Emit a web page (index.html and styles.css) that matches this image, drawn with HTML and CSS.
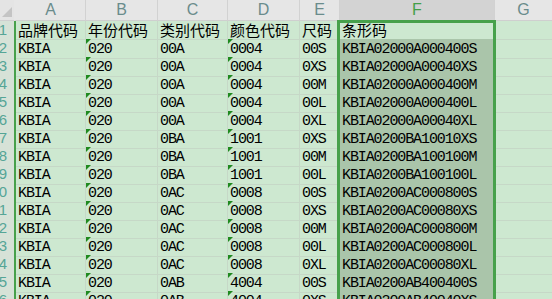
FILE: index.html
```html
<!DOCTYPE html>
<html lang="zh-CN">
<head>
  <meta charset="UTF-8" />
  <title>条形码</title>
  <link rel="stylesheet" href="styles.css">
</head>
<body>
  <div class="sheet">
    <div class="row head">
      <div class="corner"><span class="tri"></span></div>
      <div class="col">A</div>
      <div class="col">B</div>
      <div class="col">C</div>
      <div class="col">D</div>
      <div class="col">E</div>
      <div class="col sel">F</div>
      <div class="col last">G</div>
    </div>
    <div id="rows"></div>
    <div class="selbox"></div>
  </div>

  <script>
    const rows = [
      ["00A", "0004", "00S"], ["00A", "0004", "0XS"], ["00A", "0004", "00M"],
      ["00A", "0004", "00L"], ["00A", "0004", "0XL"], ["0BA", "1001", "0XS"],
      ["0BA", "1001", "00M"], ["0BA", "1001", "00L"], ["0AC", "0008", "00S"],
      ["0AC", "0008", "0XS"], ["0AC", "0008", "00M"], ["0AC", "0008", "00L"],
      ["0AC", "0008", "0XL"], ["0AB", "4004", "00S"], ["0AB", "4004", "0XS"]
    ];

    const box = document.getElementById("rows");
    let html = `<div class="row"><div class="num">1</div>
      <div class="cell a cn">品牌代码</div><div class="cell cn">年份代码</div>
      <div class="cell cn">类别代码</div><div class="cell cn">颜色代码</div>
      <div class="cell cn">尺码</div><div class="cell cn">条形码</div>
      <div class="cell last"></div></div>`;

    rows.forEach((r, i) => {
      const code = "KBIA" + "020" + r[0] + r[1] + r[2];
      html += `<div class="row"><div class="num">${i + 2}</div>
        <div class="cell a">KBIA</div><div class="cell txt">020</div>
        <div class="cell">${r[0]}</div><div class="cell txt">${r[1]}</div>
        <div class="cell">${r[2]}</div><div class="cell f">${code}</div>
        <div class="cell last"></div></div>`;
    });
    box.innerHTML = html;
  </script>
</body>
</html>
```

FILE: styles.css
```css
body {
  margin: 0;
  background: #cde8d0;
  overflow: hidden;
}
.sheet {
  position: relative;
  height: 299px;
  overflow: hidden;
}
.row {
  display: grid;
  grid-template-columns: 14px 72px 72px 70px 72px 40px 155px 1fr;
  height: 18px;
}
.row.head {
  height: 21px;
}

/* column headers */
.corner {
  position: relative;
  background: #e4e4e4;
  border-bottom: 1px solid #cfcfcf;
}
.tri {
  position: absolute;
  right: 2px;
  bottom: 3px;
  width: 0;
  height: 0;
  border-left: 10px solid transparent;
  border-bottom: 10px solid #c4c4c4;
}
.col {
  box-sizing: border-box;
  background: #e6e6e6;
  border-right: 1px solid #d2d2d2;
  border-bottom: 1px solid #cfcfcf;
  font: 16px "Liberation Sans", Arial, sans-serif;
  color: #6a8c8c;
  text-align: center;
  line-height: 20px;
}
.col:nth-child(2) {
  border-left: 2px solid #e6e6e6;
}
.col.sel {
  background: #d3d3d3;
  color: #43a047;
}
.col.last {
  border-right: none;
}

/* row numbers */
.num {
  display: flex;
  justify-content: flex-end;
  overflow: hidden;
  padding-right: 7px;
  background: #d6e2d7;
  border-bottom: 1px solid #c9d3c9;
  font: 15px "Liberation Sans", Arial, sans-serif;
  color: #55a596;
  line-height: 18px;
}

/* cells */
.cell {
  position: relative;
  box-sizing: border-box;
  padding: 2px 0 0 2px;
  border-right: 1px solid #c6d8c7;
  border-bottom: 1px solid #c6d8c7;
  font: 15px "Liberation Mono", "Courier New", monospace;
  letter-spacing: -1.1px;
  color: #000;
  line-height: 17px;
  white-space: nowrap;
}
.cell.a {
  border-left: 2px solid #47a14b;
}
.cell.cn {
  padding-top: 0;
  font: 15px "Noto Sans CJK SC", sans-serif;
  letter-spacing: 0;
  line-height: 18px;
}
.cell.f {
  background: #aac5aa;
}
.cell.last {
  border-right: none;
}
.txt::before {
  content: "";
  position: absolute;
  left: 0;
  top: 0;
  border-top: 5px solid #1f8a1f;
  border-right: 5px solid transparent;
}

/* selected column outline */
.selbox {
  position: absolute;
  left: 337px;
  top: 20px;
  width: 153px;
  height: 300px;
  border: 3px solid #47a14b;
}
```
